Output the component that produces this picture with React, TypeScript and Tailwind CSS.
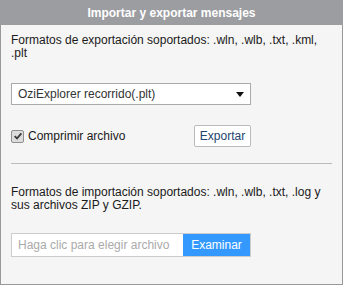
import { useState } from 'react'

const font = { fontFamily: '"Liberation Sans", Arial, sans-serif' }

function CheckBox({ checked, onChange }: { checked: boolean; onChange: () => void }) {
  return (
    <button
      type="button"
      onClick={onChange}
      className="flex h-[13px] w-[13px] items-center justify-center rounded-[2px] border border-[#8f8f8f] bg-[#dcdcdc]"
    >
      {checked && (
        <svg viewBox="0 0 12 12" className="h-[10px] w-[10px]">
          <path d="M2 6.2 L4.8 9 L10 2.8" fill="none" stroke="#3a3a3a" strokeWidth="2.2" />
        </svg>
      )}
    </button>
  )
}

export default function App() {
  const [compress, setCompress] = useState(true)

  return (
    <div className="w-[343px] h-[285px] flex flex-col text-[12px] text-[#1a1a1a]" style={font}>
      <div className="h-[25px] shrink-0 flex items-center justify-center bg-[#9c9da1] text-[12px] font-bold text-white">
        Importar y exportar mensajes
      </div>

      <div className="flex-1 flex flex-col border-x border-b border-[#999] bg-[#f5f5f5] pl-[10px] pr-[10px] pt-[9px]">
        <p className="leading-[13px]">
          Formatos de exportación soportados: .wln, .wlb, .txt, .kml, .plt
        </p>

        <div className="mt-[23px] flex h-[22px] w-[240px] items-center justify-between border border-[#aaa] bg-white pl-[6px] pr-[6px] text-[#333]">
          <span>OziExplorer recorrido(.plt)</span>
          <svg viewBox="0 0 8 5" className="h-[5px] w-[8px]">
            <path d="M0 0 H8 L4 5 Z" fill="#111" />
          </svg>
        </div>

        <div className="mt-[20px] flex h-[22px] w-[240px] items-center justify-between">
          <label className="flex items-center gap-[4px]">
            <CheckBox checked={compress} onChange={() => setCompress(!compress)} />
            <span>Comprimir archivo</span>
          </label>
          <button
            type="button"
            className="h-[22px] w-[57px] rounded-[2px] border border-[#bbb] bg-white text-[12px] text-[#22446e]"
          >
            Exportar
          </button>
        </div>

        <div className="mt-[16px] h-px bg-[#bbb]" />

        <p className="mt-[22px] leading-[13px]">
          Formatos de importación soportados: .wln, .wlb, .txt, .log y sus archivos ZIP y GZIP.
        </p>

        <div className="mt-[21px] flex h-[24px] w-[240px] border border-[#ccc] bg-white">
          <span className="flex-1 flex items-center pl-[6px] text-[#aaa]">Haga clic para elegir archivo</span>
          <button type="button" className="w-[67px] bg-[#3399ff] text-[12px] text-white">
            Examinar
          </button>
        </div>
      </div>
    </div>
  )
}
